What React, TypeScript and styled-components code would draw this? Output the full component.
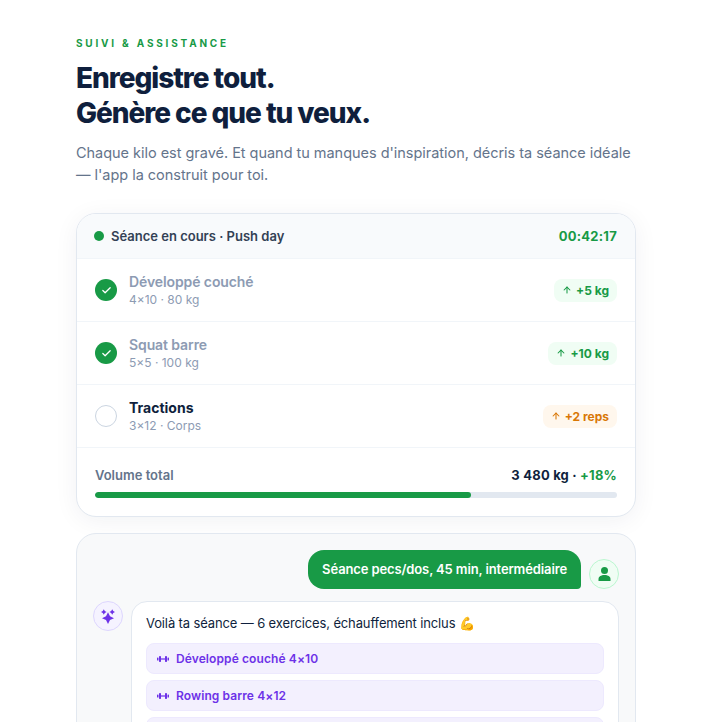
import React from "react";
import styled, { createGlobalStyle } from "styled-components";
import { Check, ArrowUp } from "lucide-react";

const GREEN = "#189a46";
const VIOLET = "#6d32e8";
const MUTED = "#8d9bb3";

const Global = createGlobalStyle`
  html, body { margin: 0; padding: 0; background: #fff; overflow: hidden; height: 722px; }
  body { font-family: Inter, "Liberation Sans", sans-serif; -webkit-font-smoothing: antialiased; }
`;

const Page = styled.div`
  width: 560px;
  margin: 0 auto 0 76px;
  padding-top: 37px;
`;
const Eyebrow = styled.div`
  font-size: 10px;
  line-height: 12px;
  font-weight: 700;
  letter-spacing: 2.8px;
  color: ${GREEN};
  text-transform: uppercase;
  margin-bottom: 12px;
`;
const Title = styled.h2`
  margin: 0 0 11px;
  font-size: 28px;
  line-height: 35px;
  font-weight: 800;
  letter-spacing: -1.05px;
  color: #0f1f3d;
`;
const Lead = styled.p`
  margin: 0 0 27px;
  font-size: 14.5px;
  line-height: 22px;
  letter-spacing: -0.03px;
  color: #64748b;
`;
const Card = styled.section`
  background: #fff;
  border: 1px solid #e2e8f0;
  border-radius: 20px;
  overflow: hidden;
  box-shadow: 0 4px 24px rgba(15, 31, 61, 0.06);
  margin-bottom: 16px;
`;
const Head = styled.header`
  display: flex;
  align-items: center;
  justify-content: space-between;
  box-sizing: border-box;
  height: 45px;
  padding: 0 18px 1px 17px;
  background: #f8fafc;
  border-bottom: 1px solid #f1f5f9;
`;
const HeadLeft = styled.div`
  display: flex;
  align-items: center;
  gap: 7px;
  font-size: 13px;
  font-weight: 600;
  color: #334155;
`;
const Dot = styled.span`
  width: 10px;
  height: 10px;
  border-radius: 50%;
  background: ${GREEN};
`;
const Timer = styled.span`
  font-size: 13px;
  font-weight: 700;
  letter-spacing: 0.25px;
  color: ${GREEN};
`;
const Row = styled.div`
  display: flex;
  align-items: center;
  gap: 12px;
  height: 62px;
  padding: 0 18px;
  border-bottom: 1px solid #f1f5f9;
`;
const Status = styled.span<{ $done: boolean }>`
  flex: none;
  width: 22px;
  height: 22px;
  border-radius: 50%;
  display: flex;
  align-items: center;
  justify-content: center;
  box-sizing: border-box;
  background: ${(p) => (p.$done ? GREEN : "#fff")};
  border: ${(p) => (p.$done ? "none" : "1.5px solid #cbd5e1")};
  color: #fff;
`;
const Info = styled.div`
  flex: 1;
  min-width: 0;
`;
const Name = styled.div<{ $done: boolean }>`
  font-size: 14px;
  line-height: 18px;
  font-weight: ${(p) => (p.$done ? 600 : 700)};
  letter-spacing: ${(p) => (p.$done ? "-0.1px" : "0")};
  color: ${(p) => (p.$done ? MUTED : "#0f1f3d")};
`;
const Meta = styled.div`
  font-size: 12px;
  line-height: 14px;
  margin-top: 2px;
  color: ${MUTED};
`;
const Badge = styled.span<{ $tone: "green" | "orange" }>`
  display: inline-flex;
  align-items: center;
  gap: 4px;
  height: 23px;
  padding: 0 8px;
  border-radius: 8px;
  font-size: 12px;
  font-weight: 700;
  background: ${(p) => (p.$tone === "green" ? "#f0fdf4" : "#fff7ed")};
  color: ${(p) => (p.$tone === "green" ? GREEN : "#d97706")};
`;
const Foot = styled.footer`
  padding: 19px 18px 18px;
`;
const FootLine = styled.div`
  display: flex;
  justify-content: space-between;
  align-items: center;
  font-size: 13px;
  line-height: 16px;
  margin-bottom: 9px;
`;
const FootLabel = styled.span`
  font-weight: 600;
  color: #64748b;
`;
const FootValue = styled.span`
  font-weight: 700;
  letter-spacing: 0.2px;
  color: #0f1f3d;
`;
const Up = styled.span`
  color: ${GREEN};
`;
const Track = styled.div`
  height: 6px;
  border-radius: 3px;
  background: #e2e8f0;
  overflow: hidden;
`;
const Fill = styled.div`
  height: 100%;
  border-radius: 3px;
  background: ${GREEN};
`;
const Chat = styled.section`
  background: #f8f9fa;
  border: 1px solid #e2e8f0;
  border-radius: 20px;
  padding: 16px;
`;
const UserLine = styled.div`
  display: flex;
  justify-content: flex-end;
  align-items: flex-end;
  gap: 8px;
  margin-bottom: 12px;
`;
const Bubble = styled.div`
  background: ${GREEN};
  color: #fff;
  font-size: 13px;
  font-weight: 600;
  line-height: 19px;
  letter-spacing: -0.12px;
  padding: 10px 14px;
  border-radius: 16px 16px 4px 16px;
`;
const Avatar = styled.span<{ $tone: "green" | "violet" }>`
  flex: none;
  width: 30px;
  height: 30px;
  box-sizing: border-box;
  border-radius: 50%;
  display: flex;
  align-items: center;
  justify-content: center;
  background: ${(p) => (p.$tone === "green" ? "#f0fdf4" : "#f5f3ff")};
  border: 1px solid ${(p) => (p.$tone === "green" ? "#bbf7d0" : "#ddd6fe")};
  color: ${(p) => (p.$tone === "green" ? GREEN : VIOLET)};
`;
const BotLine = styled.div`
  display: flex;
  align-items: flex-start;
  gap: 8px;
`;
const Reply = styled.div`
  flex: 1;
  background: #fff;
  border: 1px solid #e2e8f0;
  border-radius: 16px;
  padding: 11px 14px 12px;
`;
const ReplyText = styled.div`
  font-size: 13px;
  line-height: 20px;
  letter-spacing: -0.13px;
  color: #0f1f3d;
  margin-bottom: 10px;
`;
const Chip = styled.div`
  display: flex;
  align-items: center;
  gap: 7px;
  box-sizing: border-box;
  height: 31px;
  padding: 0 10px;
  margin-bottom: 6px;
  border-radius: 8px;
  background: #f3f0fe;
  border: 1px solid #ede9fe;
  color: ${VIOLET};
  font-size: 12px;
  font-weight: 600;
  letter-spacing: 0.1px;
`;

const SparkIcon = () => (
  <svg width="14" height="15" viewBox="0 0 14 15" fill="currentColor" aria-hidden="true">
    <path d="M7 3.3 L9 7.3 L13 9.2 L9 11.1 L7 15 L5 11.1 L1 9.2 L5 7.3 Z" />
    <path d="M2.8 0.2 L3.8 2 L5.6 3 L3.8 4 L2.8 5.8 L1.8 4 L0 3 L1.8 2 Z" />
    <path d="M11.2 0.2 L12.2 2 L14 3 L12.2 4 L11.2 5.8 L10.2 4 L8.4 3 L10.2 2 Z" />
  </svg>
);
const PersonIcon = () => (
  <svg width="13" height="14" viewBox="0 0 13 14" fill="currentColor" aria-hidden="true">
    <circle cx="6.5" cy="3.5" r="3.5" />
    <path d="M0.5 14 V12 C0.5 9.6 3 8 6.5 8 C10 8 12.5 9.6 12.5 12 V14 Z" />
  </svg>
);
const BarbellIcon = () => (
  <svg width="12" height="8" viewBox="0 0 12 8" fill="currentColor" aria-hidden="true">
    <rect x="0" y="2.5" width="1.5" height="3" rx="0.6" />
    <rect x="2" y="1" width="2" height="6" rx="0.7" />
    <rect x="4" y="3.4" width="4" height="1.2" />
    <rect x="8" y="1" width="2" height="6" rx="0.7" />
    <rect x="10.5" y="2.5" width="1.5" height="3" rx="0.6" />
  </svg>
);

const rows = [
  { name: "Développé couché", meta: "4×10 · 80 kg", done: true, tone: "green" as const, delta: "+5 kg" },
  { name: "Squat barre", meta: "5×5 · 100 kg", done: true, tone: "green" as const, delta: "+10 kg" },
  { name: "Tractions", meta: "3×12 · Corps", done: false, tone: "orange" as const, delta: "+2 reps" },
];
const chips = ["Développé couché 4×10", "Rowing barre 4×12"];

export default function App() {
  return (
    <Page>
      <Global />
      <Eyebrow>Suivi &amp; assistance</Eyebrow>
      <Title>
        Enregistre tout.
        <br />
        Génère ce que tu veux.
      </Title>
      <Lead>
        Chaque kilo est gravé. Et quand tu manques d'inspiration, décris ta séance idéale — l'app la construit pour toi.
      </Lead>
      <Card>
        <Head>
          <HeadLeft>
            <Dot />
            Séance en cours · Push day
          </HeadLeft>
          <Timer>00:42:17</Timer>
        </Head>
        {rows.map((r) => (
          <Row key={r.name}>
            <Status $done={r.done}>{r.done && <Check size={11} strokeWidth={2.75} />}</Status>
            <Info>
              <Name $done={r.done}>{r.name}</Name>
              <Meta>{r.meta}</Meta>
            </Info>
            <Badge $tone={r.tone}>
              <ArrowUp size={10} strokeWidth={2.5} />
              {r.delta}
            </Badge>
          </Row>
        ))}
        <Foot>
          <FootLine>
            <FootLabel>Volume total</FootLabel>
            <FootValue>
              3 480 kg · <Up>+18%</Up>
            </FootValue>
          </FootLine>
          <Track>
            <Fill style={{ width: "72%" }} />
          </Track>
        </Foot>
      </Card>
      <Chat>
        <UserLine>
          <Bubble>Séance pecs/dos, 45 min, intermédiaire</Bubble>
          <Avatar $tone="green">
            <PersonIcon />
          </Avatar>
        </UserLine>
        <BotLine>
          <Avatar $tone="violet">
            <SparkIcon />
          </Avatar>
          <Reply>
            <ReplyText>Voilà ta séance — 6 exercices, échauffement inclus 💪</ReplyText>
            {chips.map((c) => (
              <Chip key={c}>
                <BarbellIcon />
                {c}
              </Chip>
            ))}
            <Chip aria-hidden="true" />
          </Reply>
        </BotLine>
      </Chat>
    </Page>
  );
}
